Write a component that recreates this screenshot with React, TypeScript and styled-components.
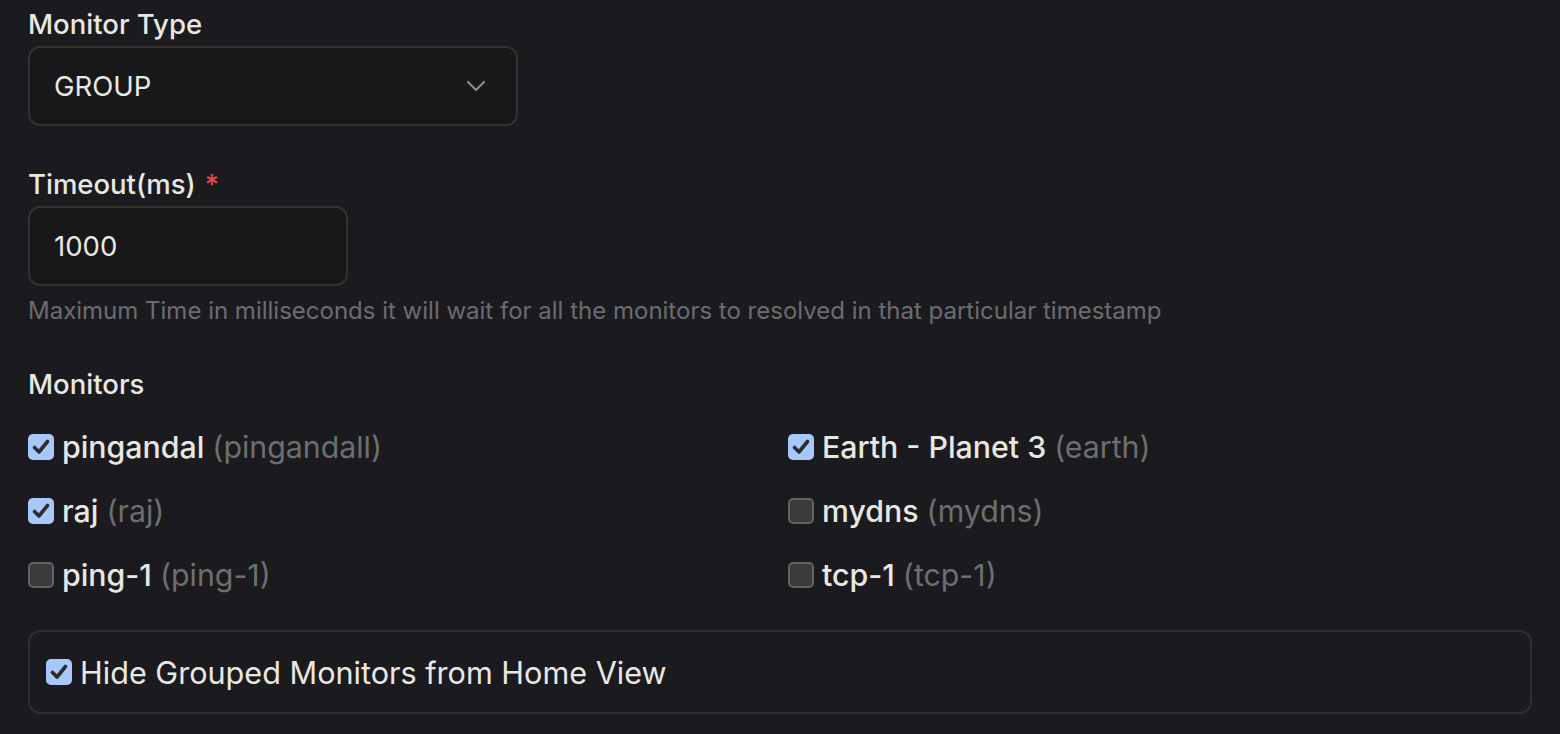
import styled, { createGlobalStyle } from "styled-components";

/* --------------------------------------------------------
   DATA
-------------------------------------------------------- */
const monitors = [
  { name: "pingandal", slug: "pingandall", checked: true },
  { name: "Earth - Planet 3", slug: "earth", checked: true },
  { name: "raj", slug: "raj", checked: true },
  { name: "mydns", slug: "mydns", checked: false },
  { name: "ping-1", slug: "ping-1", checked: false },
  { name: "tcp-1", slug: "tcp-1", checked: false },
];

/* --------------------------------------------------------
   STYLES
-------------------------------------------------------- */
const GlobalStyle = createGlobalStyle`
  html, body {
    margin: 0;
    background: #1b1b1f;
    font-family: Inter, "Noto Sans", "Liberation Sans", sans-serif;
    color: #e8e8e3;
  }
  * { box-sizing: border-box; }
`;

const Form = styled.div`
  padding: 6px 28px 0;
  display: flex;
  flex-direction: column;
`;

const Field = styled.div<{ $gap?: number }>`
  display: flex;
  flex-direction: column;
  align-items: flex-start;
  margin-bottom: ${(p) => p.$gap ?? 40}px;
`;

const Label = styled.div`
  font-size: 27.5px;
  font-weight: 500;
  line-height: 36px;
  margin-bottom: 4px;
  color: #e8e8e3;
`;

const Required = styled.span`
  color: #e5484d;
  margin-left: 9px;
`;

const Box = styled.div<{ $width: number }>`
  width: ${(p) => p.$width}px;
  height: 80px;
  border: 2px solid #32322e;
  border-radius: 12px;
  background: #18181b;
  display: flex;
  align-items: center;
  justify-content: space-between;
  padding: 0 30px 0 24px;
  font-size: 27.5px;
  color: #e8e8e3;
`;

const Help = styled.div`
  margin-top: 10px;
  font-size: 24px;
  line-height: 30px;
  color: #6c6c70;
`;

const Grid = styled.div`
  display: grid;
  grid-template-columns: 1fr 1fr;
  column-gap: 16px;
  width: 100%;
  margin-top: 9px;
`;

const Row = styled.label`
  display: flex;
  align-items: center;
  height: 64px;
  font-size: 30.3px;
  gap: 8px;
`;

const Check = styled.span<{ $on: boolean }>`
  flex: none;
  width: 26px;
  height: 26px;
  border-radius: 5px;
  display: grid;
  place-items: center;
  background: ${(p) => (p.$on ? "#a8c8fb" : "#3b3b3b")};
  border: ${(p) => (p.$on ? "none" : "2px solid #626262")};
`;

const Name = styled.span`
  font-weight: 500;
  color: #e8e8e3;
`;

const Slug = styled.span`
  color: #6e6e6e;
  margin-left: 8px;
`;

const OptionBox = styled.div`
  margin-top: 23px;
  width: 100%;
  height: 84px;
  border: 2px solid #2f2f31;
  border-radius: 12px;
  display: flex;
  align-items: center;
  padding-left: 16px;
  gap: 8px;
  font-size: 30.6px;
`;

function Checkbox({ on }: { on: boolean }) {
  return (
    <Check $on={on}>
      {on && (
        <svg width="26" height="26" viewBox="0 0 26 26">
          <path
            d="M6.5 13.5 L11 18 L19.5 7.5"
            fill="none"
            stroke="#2d2d2f"
            strokeWidth="3.6"
            strokeLinecap="round"
            strokeLinejoin="round"
          />
        </svg>
      )}
    </Check>
  );
}

export default function App() {
  return (
    <>
      <GlobalStyle />
      <Form>
        <Field>
          <Label>Monitor Type</Label>
          <Box $width={490}>
            GROUP
            <svg width="20" height="12" viewBox="0 0 20 12">
              <path d="M2 2 L10 10 L18 2" fill="none" stroke="#8a8a8c" strokeWidth="2.2" strokeLinecap="round" strokeLinejoin="round" />
            </svg>
          </Box>
        </Field>

        <Field>
          <Label>
            Timeout(ms)<Required>*</Required>
          </Label>
          <Box $width={320}>1000</Box>
          <Help>Maximum Time in milliseconds it will wait for all the monitors to resolved in that particular timestamp</Help>
        </Field>

        <Field $gap={0}>
          <Label>Monitors</Label>
          <Grid>
            {monitors.map((m) => (
              <Row key={m.slug}>
                <Checkbox on={m.checked} />
                <span>
                  <Name>{m.name}</Name>
                  <Slug>({m.slug})</Slug>
                </span>
              </Row>
            ))}
          </Grid>
        </Field>

        <OptionBox>
          <Checkbox on />
          Hide Grouped Monitors from Home View
        </OptionBox>
      </Form>
    </>
  );
}
